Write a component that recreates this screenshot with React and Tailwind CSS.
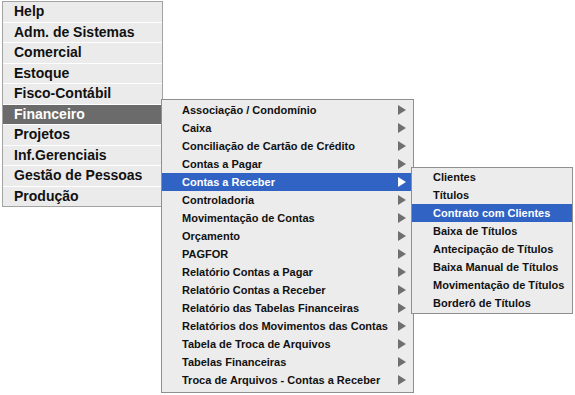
import React from 'react';

const mainItems = [
  'Help',
  'Adm. de Sistemas',
  'Comercial',
  'Estoque',
  'Fisco-Contábil',
  'Financeiro',
  'Projetos',
  'Inf.Gerenciais',
  'Gestão de Pessoas',
  'Produção',
];

const finItems = [
  'Associação / Condomínio',
  'Caixa',
  'Conciliação de Cartão de Crédito',
  'Contas a Pagar',
  'Contas a Receber',
  'Controladoria',
  'Movimentação de Contas',
  'Orçamento',
  'PAGFOR',
  'Relatório Contas a Pagar',
  'Relatório Contas a Receber',
  'Relatório das Tabelas Financeiras',
  'Relatórios dos Movimentos das Contas',
  'Tabela de Troca de Arquivos',
  'Tabelas Financeiras',
  'Troca de Arquivos - Contas a Receber',
];

const receberItems = [
  'Clientes',
  'Títulos',
  'Contrato com Clientes',
  'Baixa de Títulos',
  'Antecipação de Títulos',
  'Baixa Manual de Títulos',
  'Movimentação de Títulos',
  'Borderô de Títulos',
];

const Arrow = ({ active }) => (
  <svg width="8" height="10" viewBox="0 0 8 10" className="shrink-0">
    <path d="M0 0 L8 5 L0 10 Z" fill={active ? '#ffffff' : '#6f6f6f'} />
  </svg>
);

const App = () => {
  return (
    <div className="relative w-[575px] h-[395px] bg-white font-['Liberation_Sans',Arial,sans-serif] font-bold overflow-hidden">
      <div className="ml-[2px] mt-[1px] w-[161px] border border-[#a3a3a3] bg-white flex flex-col gap-px">
        {mainItems.map((item) => (
          <div
            key={item}
            className={`h-[19.5px] flex items-center pl-[11px] text-[14px] whitespace-nowrap ${
              item === 'Financeiro' ? 'bg-[#6b6b6b] text-white' : 'bg-[#ebebeb] text-[#111]'
            }`}
          >
            {item}
          </div>
        ))}
      </div>

      <div className="absolute left-[161px] top-[99px] w-[253px] border border-[#8f8f8f] bg-[#ececec] pt-px pb-[3px]">
        {finItems.map((item) => {
          const active = item === 'Contas a Receber';
          return (
            <div
              key={item}
              className={`h-[18px] flex items-center justify-between pl-[20px] pr-[7px] text-[11px] whitespace-nowrap ${
                active ? 'bg-[#3163c5] text-white' : 'text-[#111]'
              }`}
            >
              <span>{item}</span>
              <Arrow active={active} />
            </div>
          );
        })}
      </div>

      <div className="absolute left-[411px] top-[167px] w-[162px] border border-[#8f8f8f] bg-[#ececec] pb-px">
        {receberItems.map((item) => {
          const active = item === 'Contrato com Clientes';
          return (
            <div
              key={item}
              className={`h-[18px] flex items-center pl-[21px] text-[11px] whitespace-nowrap ${
                active ? 'bg-[#3163c5] text-white' : 'text-[#111]'
              }`}
            >
              {item}
            </div>
          );
        })}
      </div>
    </div>
  );
};

export default App;
